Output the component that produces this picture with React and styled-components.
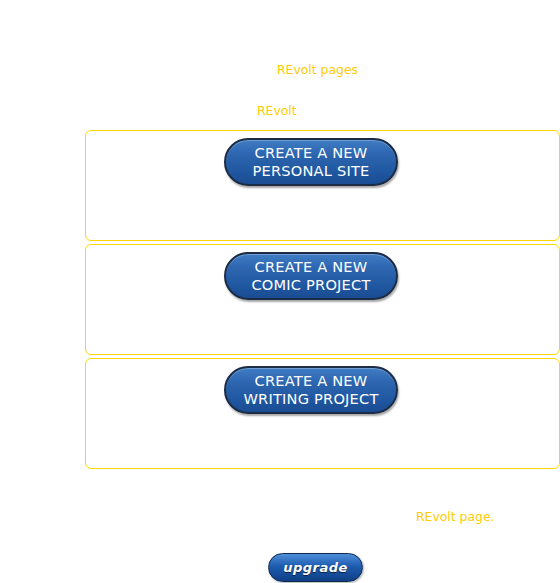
import React from 'react'
import styled, { createGlobalStyle } from 'styled-components'

const GlobalStyle = createGlobalStyle`
  body {
    margin: 0;
    background: #ffffff;
    font-family: "DejaVu Sans", Verdana, sans-serif;
  }
`

const Page = styled.div`
  width: 560px;
  height: 583px;
  overflow: hidden;
  padding-top: 62px;
  box-sizing: border-box;
`

const Note = styled.div`
  font-size: 12.4px;
  line-height: 16px;
  color: #ffcc00;
  padding-left: ${props => props.left}px;
  margin-top: ${props => props.top || 0}px;
`

const BoxList = styled.div`
  display: flex;
  flex-direction: column;
  gap: 3px;
  margin: 11px 0 0 85px;
`

const Box = styled.div`
  width: 475px;
  height: 111px;
  box-sizing: border-box;
  border: 1px solid #ffd700;
  border-radius: 6px;
  padding: 7px 0 0 138px;
`

const PillButton = styled.a`
  display: flex;
  flex-direction: column;
  align-items: center;
  justify-content: center;
  width: 174px;
  height: 48px;
  box-sizing: border-box;
  border-radius: 24px;
  border: 2px solid #1c2c44;
  background: linear-gradient(to bottom, #3f7cc4 0%, #2c64ae 35%, #2058a2 70%, #1a4c92 100%);
  box-shadow: 1px 2px 2px rgba(0, 0, 0, 0.35), inset 0 1px 0 rgba(255, 255, 255, 0.25);
  color: #ffffff;
  font-size: 14.6px;
  line-height: 18px;
  letter-spacing: 0.2px;
  text-align: center;
  text-decoration: none;
  cursor: pointer;
`

const UpgradeRow = styled.div`
  display: flex;
  padding-left: 268px;
  margin-top: 28px;
`

const UpgradeButton = styled.a`
  display: flex;
  align-items: center;
  justify-content: center;
  width: 95px;
  height: 29px;
  box-sizing: border-box;
  border-radius: 15px;
  border: 1px solid #0e2850;
  background: linear-gradient(to bottom, #4f8fd8 0%, #1d5cb0 45%, #0f3f86 100%);
  box-shadow: 1px 1px 2px rgba(0, 0, 0, 0.3);
  color: #ffffff;
  font-family: "DejaVu Sans", sans-serif;
  font-weight: bold;
  font-style: italic;
  font-size: 13px;
  letter-spacing: 0.5px;
  text-decoration: none;
  text-shadow: 0 1px 1px rgba(0, 0, 0, 0.6);
`

const projects = [
  ['CREATE A NEW', 'PERSONAL SITE'],
  ['CREATE A NEW', 'COMIC PROJECT'],
  ['CREATE A NEW', 'WRITING PROJECT'],
]

export default function App() {
  return (
    <Page>
      <GlobalStyle />
      <Note left={277}>REvolt pages</Note>
      <Note left={257} top={25}>REvolt</Note>
      <BoxList>
        {projects.map((p, i) => (
          <Box key={i}>
            <PillButton href="#">
              <span>{p[0]}</span>
              <span>{p[1]}</span>
            </PillButton>
          </Box>
        ))}
      </BoxList>
      <Note left={416} top={40}>REvolt page.</Note>
      <UpgradeRow>
        <UpgradeButton href="#">upgrade</UpgradeButton>
      </UpgradeRow>
    </Page>
  )
}
